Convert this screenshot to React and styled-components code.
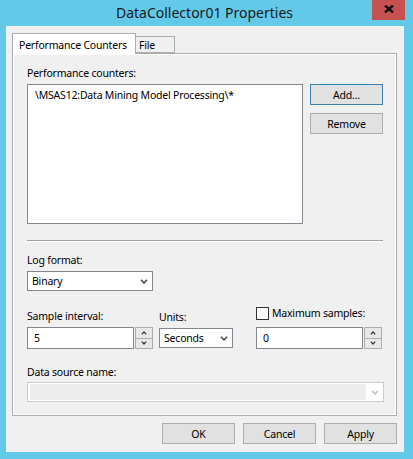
import React from 'react';
import styled, { createGlobalStyle } from 'styled-components';

const GlobalStyle = createGlobalStyle`
  html, body {
    margin: 0;
    padding: 0;
    background: #62c9e9;
  }
  body {
    font-family: 'Noto Sans', 'Liberation Sans', sans-serif;
    font-size: 10.5px;
    letter-spacing: -0.2px;
    color: #000;
  }
  * { box-sizing: border-box; }
`;

const Window = styled.div`
  width: 413px;
  height: 459px;
  background: #62c9e9;
  display: flex;
  flex-direction: column;
  padding: 0 9px 7px 6px;
`;

const TitleBar = styled.div`
  position: relative;
  height: 29px;
  margin: 0 -9px 0 -6px;
  display: flex;
  justify-content: center;
  align-items: center;
  padding-right: 4px;
  padding-bottom: 1px;
`;

const Title = styled.div`
  font-size: 14px;
  letter-spacing: 0;
  color: #1b1b1b;
`;

const CloseButton = styled.div`
  position: absolute;
  top: 0;
  right: 8px;
  width: 33px;
  height: 20px;
  background: #c75050;
  display: flex;
  align-items: center;
  justify-content: center;
  padding-bottom: 2px;
`;

const Client = styled.div`
  flex: 1;
  background: #f0f0f0;
  padding: 7px 7px 8px 6px;
  display: flex;
  flex-direction: column;
`;

const TabStrip = styled.div`
  display: flex;
  align-items: flex-end;
  height: 20px;
`;

const Tab = styled.div`
  position: relative;
  z-index: ${p => (p.$active ? 2 : 1)};
  width: ${p => p.$width}px;
  height: ${p => (p.$active ? '21px' : '17px')};
  margin-bottom: ${p => (p.$active ? '-1px' : '0')};
  margin-left: ${p => (p.$active ? '0' : '-1px')};
  padding: ${p => (p.$active ? '2px 0 0 6px' : '1px 0 0 3px')};
  background: ${p => (p.$active ? '#fff' : '#f0f0f0')};
  border: 1px solid #adadad;
  border-bottom: ${p => (p.$active ? 'none' : '1px solid #adadad')};
  display: flex;
  align-items: center;
  line-height: 16px;
  white-space: nowrap;
`;

const Panel = styled.div`
  border: 1px solid #adadad;
  box-shadow: inset 0 0 0 1px #fff;
  padding: 11px 13px 13px 14px;
  display: flex;
  flex-direction: column;
`;

const Label = styled.div`
  line-height: 16px;
  height: 16px;
  margin-top: ${p => p.$top || 0}px;
  margin-bottom: ${p => (p.$gap == null ? 3 : p.$gap)}px;
  white-space: nowrap;
`;

const ListRow = styled.div`
  display: flex;
  gap: 7px;
`;

const ListBox = styled.div`
  width: 276px;
  height: 140px;
  background: #fff;
  border: 1px solid #828790;
  padding: 2px 7px;
  line-height: 16px;
  white-space: nowrap;
`;

const ButtonColumn = styled.div`
  display: flex;
  flex-direction: column;
  gap: 8px;
`;

const Button = styled.div`
  width: 73px;
  height: 21px;
  background: #e1e1e1;
  border: 1px solid ${p => (p.$default ? '#3c7fb1' : '#adadad')};
  display: flex;
  align-items: center;
  justify-content: center;
  line-height: 16px;
`;

const Separator = styled.div`
  margin: 16px 0 10px;
  height: 2px;
  border-top: 1px solid #a0a0a0;
  border-bottom: 1px solid #fff;
`;

const Combo = styled.div`
  width: ${p => p.$width}px;
  height: 20px;
  background: #fff;
  border: 1px solid #828790;
  display: flex;
  align-items: center;
  padding-left: 4px;
  line-height: 16px;
  margin-bottom: ${p => p.$mb || 0}px;
`;

const ComboText = styled.div`
  flex: 1;
`;

const ComboArrow = styled.div`
  width: 17px;
  height: 100%;
  display: flex;
  align-items: center;
  justify-content: center;
  padding-top: 1px;
`;

const FieldRow = styled.div`
  display: grid;
  grid-template-columns: 126px 74px 126px;
  column-gap: 6px;
  align-items: end;
  margin-top: 14px;
`;

const Field = styled.div`
  display: flex;
  flex-direction: column;
  margin-left: ${p => p.$ml || 0}px;
`;

const Spin = styled.div`
  display: flex;
  height: 22px;
  width: 126px;
`;

const SpinInput = styled.div`
  flex: 1;
  background: #fff;
  border: 1px solid #828790;
  padding: 0 6px;
  display: flex;
  align-items: center;
  line-height: 16px;
`;

const SpinButtons = styled.div`
  width: 18px;
  display: flex;
  flex-direction: column;
  margin-left: 1px;
`;

const SpinButton = styled.div`
  flex: 1;
  background: #e8e8e8;
  border: 1px solid #adadad;
  border-top: ${p => (p.$down ? 'none' : '1px solid #adadad')};
  display: flex;
  align-items: center;
  justify-content: center;
`;

const CheckRow = styled.div`
  display: flex;
  align-items: center;
  height: 16px;
  margin-bottom: 6px;
  gap: 3px;
  white-space: nowrap;
`;

const CheckBox = styled.div`
  width: 13px;
  height: 13px;
  background: #fff;
  border: 1px solid #333;
  flex: none;
`;

const DisabledCombo = styled.div`
  width: 357px;
  height: 20px;
  background: #fff;
  border: 1px solid #cccccc;
  padding: 1px 0 1px 2px;
  display: flex;
`;

const DisabledFill = styled.div`
  flex: 1;
  background: #ededed;
`;

const Footer = styled.div`
  display: flex;
  justify-content: flex-end;
  gap: 8px;
  margin-top: 7px;
`;

const Chevron = ({ color = '#3c3c3c', up = false, w = 8, h = 5 }) => (
  <svg width={w} height={h} viewBox="0 0 8 5">
    <polyline
      points={up ? '1,4.2 4,1 7,4.2' : '1,0.8 4,4 7,0.8'}
      fill="none"
      stroke={color}
      strokeWidth="1.4"
    />
  </svg>
);

const SmallChevron = ({ up }) => (
  <svg width="6" height="4" viewBox="0 0 6 4">
    <polyline
      points={up ? '0.8,3.4 3,1 5.2,3.4' : '0.8,0.6 3,3 5.2,0.6'}
      fill="none"
      stroke="#333"
      strokeWidth="1.2"
    />
  </svg>
);

const SpinBox = ({ value }) => (
  <Spin>
    <SpinInput>{value}</SpinInput>
    <SpinButtons>
      <SpinButton><SmallChevron up /></SpinButton>
      <SpinButton $down><SmallChevron /></SpinButton>
    </SpinButtons>
  </Spin>
);

export default function App() {
  return (
    <>
      <GlobalStyle />
      <Window>
        <TitleBar>
          <Title>DataCollector01 Properties</Title>
          <CloseButton>
            <svg width="10" height="8" viewBox="0 0 10 8">
              <path d="M1 0.5 L9 7.5 M9 0.5 L1 7.5" stroke="#111" strokeWidth="2.4" />
            </svg>
          </CloseButton>
        </TitleBar>
        <Client>
          <TabStrip>
            <Tab $active $width={124}>Performance Counters</Tab>
            <Tab $width={40}>File</Tab>
          </TabStrip>
          <Panel>
            <Label>Performance counters:</Label>
            <ListRow>
              <ListBox>\MSAS12:Data Mining Model Processing\*</ListBox>
              <ButtonColumn>
                <Button $default>Add...</Button>
                <Button>Remove</Button>
              </ButtonColumn>
            </ListRow>
            <Separator />
            <Label>Log format:</Label>
            <Combo $width={126}>
              <ComboText>Binary</ComboText>
              <ComboArrow><Chevron /></ComboArrow>
            </Combo>
            <FieldRow>
              <Field>
                <Label>Sample interval:</Label>
                <SpinBox value="5" />
              </Field>
              <Field>
                <Label>Units:</Label>
                <Combo $width={74} $mb={1}>
                  <ComboText>Seconds</ComboText>
                  <ComboArrow><Chevron /></ComboArrow>
                </Combo>
              </Field>
              <Field $ml={17}>
                <CheckRow>
                  <CheckBox />
                  <span>Maximum samples:</span>
                </CheckRow>
                <SpinBox value="0" />
              </Field>
            </FieldRow>
            <Label $top={15} $gap={2}>Data source name:</Label>
            <DisabledCombo>
              <DisabledFill />
              <ComboArrow><Chevron color="#bdbdbd" /></ComboArrow>
            </DisabledCombo>
          </Panel>
          <Footer>
            <Button>OK</Button>
            <Button>Cancel</Button>
            <Button>Apply</Button>
          </Footer>
        </Client>
      </Window>
    </>
  );
}
